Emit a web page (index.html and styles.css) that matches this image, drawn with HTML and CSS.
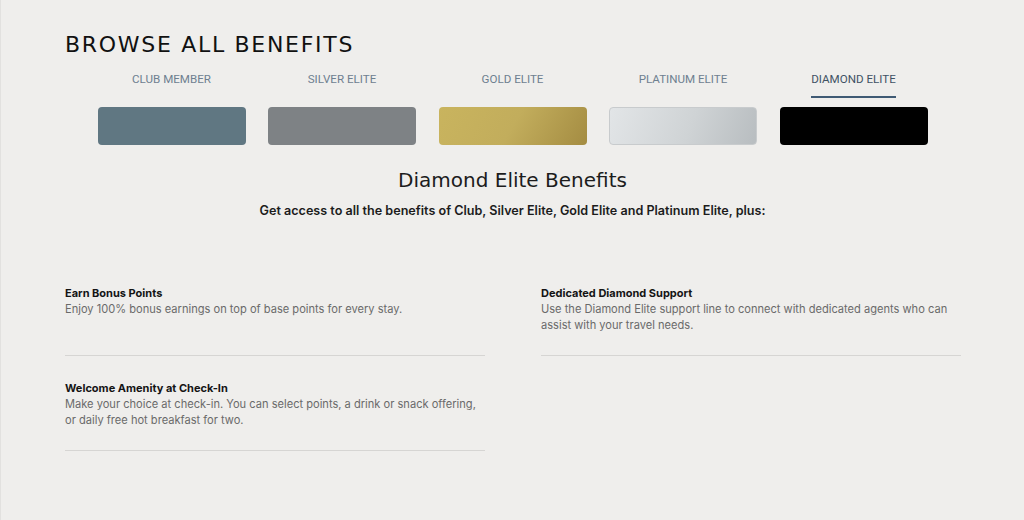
FILE: index.html
```html
<!DOCTYPE html>
<html lang="en">
<head>
<meta charset="utf-8">
<title>Browse All Benefits</title>
<link rel="stylesheet" href="styles.css">
</head>
<body>
<main class="page">
  <h1 class="title">BROWSE ALL BENEFITS</h1>
  <nav class="tiers">
    <div class="tier">
      <span class="tier-label">CLUB MEMBER</span>
      <span class="card card-club"></span>
    </div>
    <div class="tier">
      <span class="tier-label">SILVER ELITE</span>
      <span class="card card-silver"></span>
    </div>
    <div class="tier">
      <span class="tier-label">GOLD ELITE</span>
      <span class="card card-gold"></span>
    </div>
    <div class="tier">
      <span class="tier-label">PLATINUM ELITE</span>
      <span class="card card-platinum"></span>
    </div>
    <div class="tier tier-active">
      <span class="tier-label">DIAMOND ELITE</span>
      <span class="card card-diamond"></span>
    </div>
  </nav>
  <h2 class="subtitle">Diamond Elite Benefits</h2>
  <p class="intro">Get access to all the benefits of Club, Silver Elite, Gold Elite and Platinum Elite, plus:</p>
  <section class="benefits">
    <div class="benefit">
      <h3 class="benefit-title">Earn Bonus Points</h3>
      <p class="benefit-text">Enjoy 100% bonus earnings on top of base points for every stay.</p>
    </div>
    <div class="benefit">
      <h3 class="benefit-title">Dedicated Diamond Support</h3>
      <p class="benefit-text">Use the Diamond Elite support line to connect with dedicated agents who can assist with your travel needs.</p>
    </div>
    <div class="benefit">
      <h3 class="benefit-title">Welcome Amenity at Check-In</h3>
      <p class="benefit-text">Make your choice at check-in. You can select points, a drink or snack offering, or daily free hot breakfast for two.</p>
    </div>
  </section>
</main>
</body>
</html>
```

FILE: styles.css
```css
html, body {
  margin: 0;
  padding: 0;
  background: #efeeec;
}
body {
  font-family: "Inter", "Liberation Sans", sans-serif;
  color: #1c1c1c;
  border-left: 1px solid #e2e1df;
  min-height: 520px;
  box-sizing: border-box;
}
.page {
  padding: 33px 64px 0 64px;
}
.title {
  margin: 0;
  font-family: "DejaVu Sans", sans-serif;
  font-weight: normal;
  font-size: 22px;
  line-height: 24px;
  color: #111;
  letter-spacing: 1.7px;
}
.tiers {
  display: grid;
  grid-template-columns: repeat(5, 170.5px);
  justify-content: center;
  margin-top: 14px;
}
.tier {
  display: flex;
  flex-direction: column;
  align-items: center;
}
.tier-label {
  font-family: "Roboto", sans-serif;
  font-size: 11.6px;
  line-height: 14px;
  color: #6e8090;
  padding-top: 1px;
  padding-bottom: 10px;
  border-bottom: 2px solid transparent;
  margin-bottom: 9px;
}
.tier-active .tier-label {
  color: #3f5264;
  border-bottom-color: #3f5a74;
}
.card {
  display: block;
  width: 148px;
  height: 38px;
  border-radius: 4px;
  box-sizing: border-box;
}
.card-club { background: #607782; }
.card-silver { background: #7e8285; }
.card-gold { background: linear-gradient(120deg, #c9b45e 0%, #c2ad5c 50%, #a48c42 100%); }
.card-platinum {
  background: linear-gradient(110deg, #e2e5e7 0%, #cfd3d5 55%, #b8bdc0 100%);
  border: 1px solid #c8cbcd;
}
.card-diamond { background: #000; }
.subtitle {
  margin: 23px 0 0;
  text-align: center;
  font-family: "DejaVu Sans", sans-serif;
  font-weight: normal;
  font-size: 20px;
  line-height: 24px;
  color: #1c1c1c;
}
.intro {
  margin: 11px 0 0;
  text-align: center;
  font-weight: 600;
  font-size: 12.6px;
  line-height: 16px;
  color: #1c1c1c;
}
.benefits {
  display: grid;
  grid-template-columns: 420px 420px;
  column-gap: 56px;
  row-gap: 24px;
  margin-top: 66px;
}
.benefit {
  padding-bottom: 22px;
  border-bottom: 1px solid #d6d5d3;
}
.benefit-title {
  margin: 0;
  font-size: 11px;
  line-height: 16px;
  font-weight: 700;
  color: #141414;
}
.benefit-text {
  margin: 0;
  font-size: 11.1px;
  line-height: 16px;
  color: #6a6a6a;
}
```
